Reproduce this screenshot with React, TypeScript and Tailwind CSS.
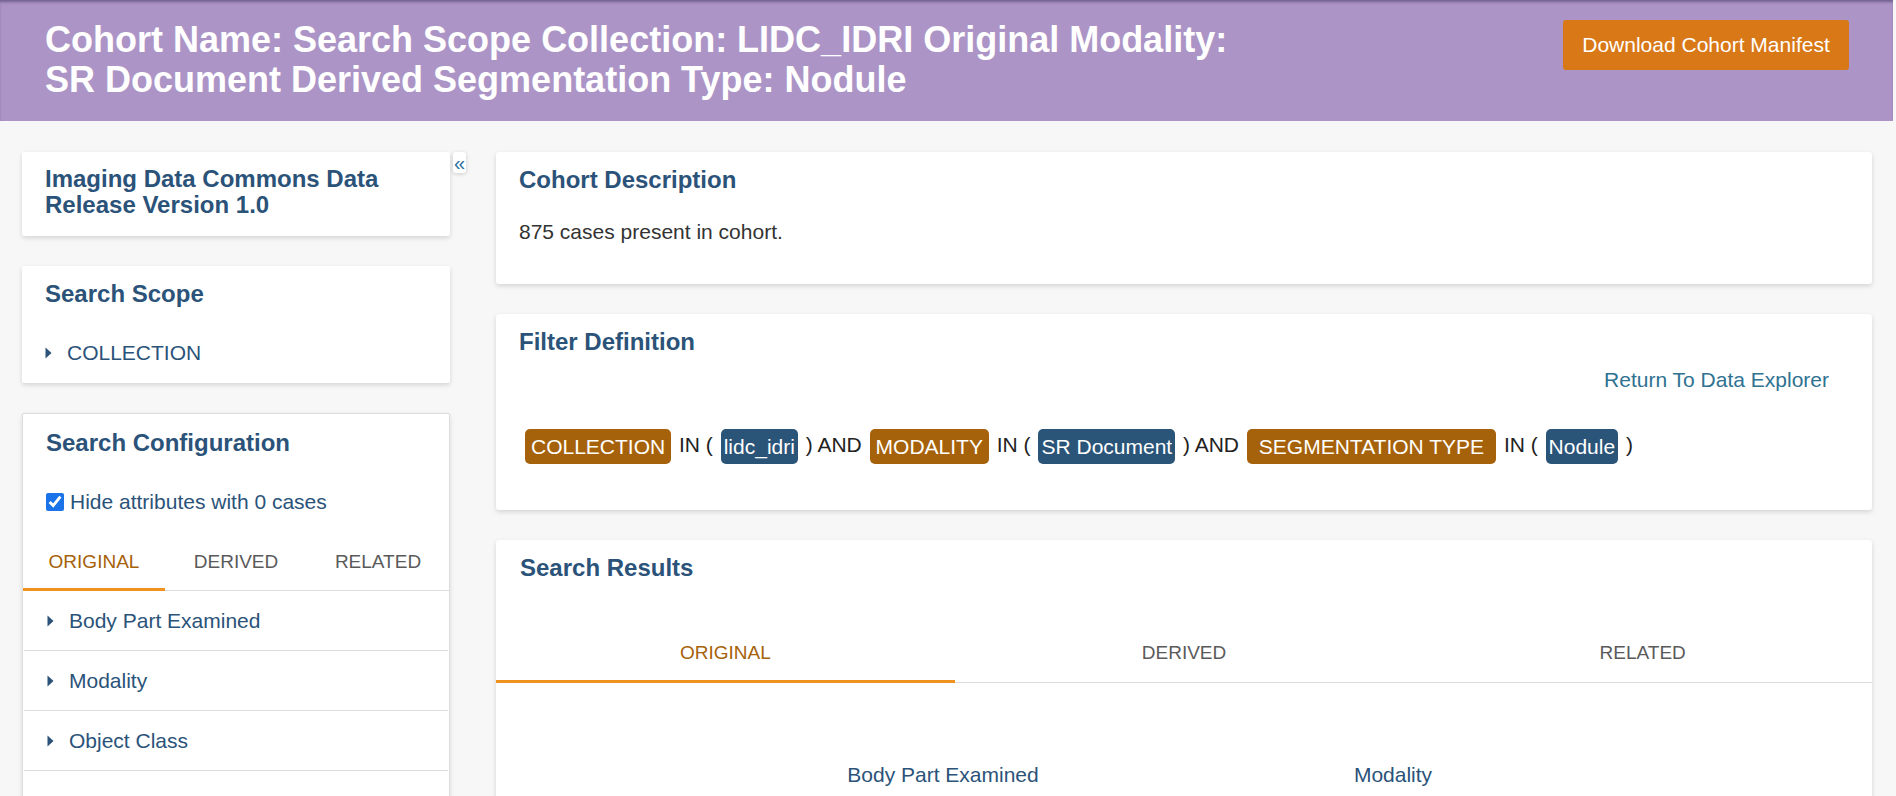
import { useState } from 'react'

const blue = 'text-[#2b5379]'

function Caret() {
  return (
    <svg width="7" height="12" viewBox="0 0 7 12" className="shrink-0">
      <path d="M0.5 0.5 L6.5 6 L0.5 11.5 Z" fill="#2b5379" />
    </svg>
  )
}

function Chip({ label, kind, wide }: { label: string; kind: 'attr' | 'value'; wide?: boolean }) {
  return (
    <span
      className={`inline-block h-[35px] leading-[35px] rounded-[5px] mx-[2px] align-middle text-white ${
        kind === 'attr' ? 'bg-[#a6620a]' : 'bg-[#2a5478]'
      } ${kind === 'attr' ? (wide ? 'px-[12px]' : 'px-[6px]') : 'px-[3px]'}`}
    >
      {label}
    </span>
  )
}

export default function App() {
  const [hideZero, setHideZero] = useState(true)
  const [leftTab, setLeftTab] = useState(0)
  const [resultTab, setResultTab] = useState(0)
  const tabs = ['ORIGINAL', 'DERIVED', 'RELATED']
  const attrs = ['Body Part Examined', 'Modality', 'Object Class', '']

  return (
    <div className="min-h-screen w-full bg-[#f7f7f7] font-['Liberation_Sans',Arial,sans-serif] overflow-hidden">
      <div className="mr-[3px]">
        {/* Header */}
        <div className="h-[121px] bg-[#ac95c6] shadow-[inset_0_3px_3px_-1px_rgba(40,30,70,0.45)] flex items-start justify-between pl-[45px] pr-[44px] pt-[20px]">
          <h1 className="max-w-[1215px] text-[36px] leading-[39.5px] font-bold text-white">
            Cohort Name: Search Scope Collection: LIDC_IDRI Original Modality: SR Document Derived Segmentation Type: Nodule
          </h1>
          <button className="h-[50px] w-[286px] rounded-[3px] bg-[#d97817] text-white text-[21px]">
            Download Cohort Manifest
          </button>
        </div>

        {/* Body */}
        <div className="flex items-start pt-[31px]">
          {/* Left column */}
          <div className="ml-[22px] w-[428px] flex flex-col gap-[30px]">
            <div className="bg-white rounded-[2px] shadow-[0_2px_5px_rgba(0,0,0,0.14)] px-[23px] pt-[14px] pb-[18px]">
              <h2 className={`text-[24px] leading-[26px] font-bold ${blue}`}>
                Imaging Data Commons Data Release Version 1.0
              </h2>
            </div>

            <div className="bg-white rounded-[2px] shadow-[0_2px_5px_rgba(0,0,0,0.14)] px-[23px] pt-[15px] pb-[18px]">
              <h2 className={`text-[24px] leading-[26px] font-bold ${blue}`}>Search Scope</h2>
              <div className={`mt-[34px] flex items-center gap-[15px] text-[21px] leading-[24px] ${blue}`}>
                <Caret />
                <span>COLLECTION</span>
              </div>
            </div>

            <div className="bg-white rounded-[2px] border border-[#dcdcdc] shadow-[0_2px_5px_rgba(0,0,0,0.12)]">
              <div className="px-[23px] pt-[16px]">
                <h2 className={`text-[24px] leading-[26px] font-bold ${blue}`}>Search Configuration</h2>
                <label className={`mt-[34px] flex items-center gap-[6px] text-[21px] leading-[24px] ${blue}`}>
                  <input
                    type="checkbox"
                    checked={hideZero}
                    onChange={() => setHideZero(!hideZero)}
                    className="w-[18px] h-[18px] accent-[#1a73e8]"
                  />
                  Hide attributes with 0 cases
                </label>
              </div>
              <div className="mt-[20px] flex border-b border-[#dcdcdc]">
                {tabs.map((t, i) => (
                  <button
                    key={t}
                    onClick={() => setLeftTab(i)}
                    className={`flex-1 pt-[17px] pb-[15px] text-[19px] leading-[22px] -mb-px border-b-[3px] ${
                      leftTab === i ? 'text-[#a6620a] border-[#f0921e]' : 'text-[#5a5a5a] border-transparent'
                    }`}
                  >
                    {t}
                  </button>
                ))}
              </div>
              <div className="px-px">
                {attrs.map((a, i) => (
                  <div key={i} className={`h-[60px] flex items-center gap-[15px] pl-[23px] border-b border-[#dcdcdc] text-[21px] ${blue}`}>
                    {a && <Caret />}
                    {a}
                  </div>
                ))}
              </div>
            </div>
          </div>

          {/* Collapse toggle */}
          <button className="ml-[3px] w-[13px] h-[21px] bg-white rounded-[3px] shadow-[0_1px_4px_rgba(0,0,0,0.18)] text-[#2b6fa0] text-[20px] leading-[18px] flex items-center justify-center">
            «
          </button>

          {/* Right column */}
          <div className="ml-[30px] mr-[21px] flex-1 flex flex-col gap-[30px]">
            <div className="bg-white rounded-[3px] shadow-[0_2px_5px_rgba(0,0,0,0.14)] px-[23px] pt-[15px] pb-[40px]">
              <h2 className={`text-[24px] leading-[26px] font-bold ${blue}`}>Cohort Description</h2>
              <p className="mt-[27px] text-[21px] leading-[24px] text-[#333]">875 cases present in cohort.</p>
            </div>

            <div className="bg-white rounded-[3px] shadow-[0_2px_5px_rgba(0,0,0,0.14)] pl-[23px] pr-[43px] pt-[15px] pb-[46px]">
              <h2 className={`text-[24px] leading-[26px] font-bold ${blue}`}>Filter Definition</h2>
              <div className="mt-[13px] flex justify-end">
                <a href="#" className="text-[21px] leading-[24px] text-[#2f7291]">
                  Return To Data Explorer
                </a>
              </div>
              <div className="mt-[35px] pl-[4px] text-[21px] leading-[35px] text-[#222] whitespace-nowrap">
                <Chip label="COLLECTION" kind="attr" /> IN ( <Chip label="lidc_idri" kind="value" /> ) AND{' '}
                <Chip label="MODALITY" kind="attr" /> IN ( <Chip label="SR Document" kind="value" /> ) AND{' '}
                <Chip label="SEGMENTATION TYPE" kind="attr" wide /> IN ( <Chip label="Nodule" kind="value" /> )
              </div>
            </div>

            <div className="bg-white rounded-[3px] shadow-[0_2px_5px_rgba(0,0,0,0.14)] h-[300px]">
              <div className="pl-[24px] pt-[15px]">
                <h2 className={`text-[24px] leading-[26px] font-bold ${blue}`}>Search Results</h2>
              </div>
              <div className="mt-[44px] flex border-b border-[#dcdcdc]">
                {tabs.map((t, i) => (
                  <button
                    key={t}
                    onClick={() => setResultTab(i)}
                    className={`flex-1 pt-[17px] pb-[16px] text-[19px] leading-[22px] -mb-px border-b-[3px] ${
                      resultTab === i ? 'text-[#a6620a] border-[#f0921e]' : 'text-[#5a5a5a] border-transparent'
                    }`}
                  >
                    {t}
                  </button>
                ))}
              </div>
              <div className={`mt-[80px] pl-[222px] flex text-[21px] leading-[24px] ${blue}`}>
                <div className="w-[450px] text-center">Body Part Examined</div>
                <div className="w-[450px] text-center">Modality</div>
              </div>
            </div>
          </div>
        </div>
      </div>
    </div>
  )
}
